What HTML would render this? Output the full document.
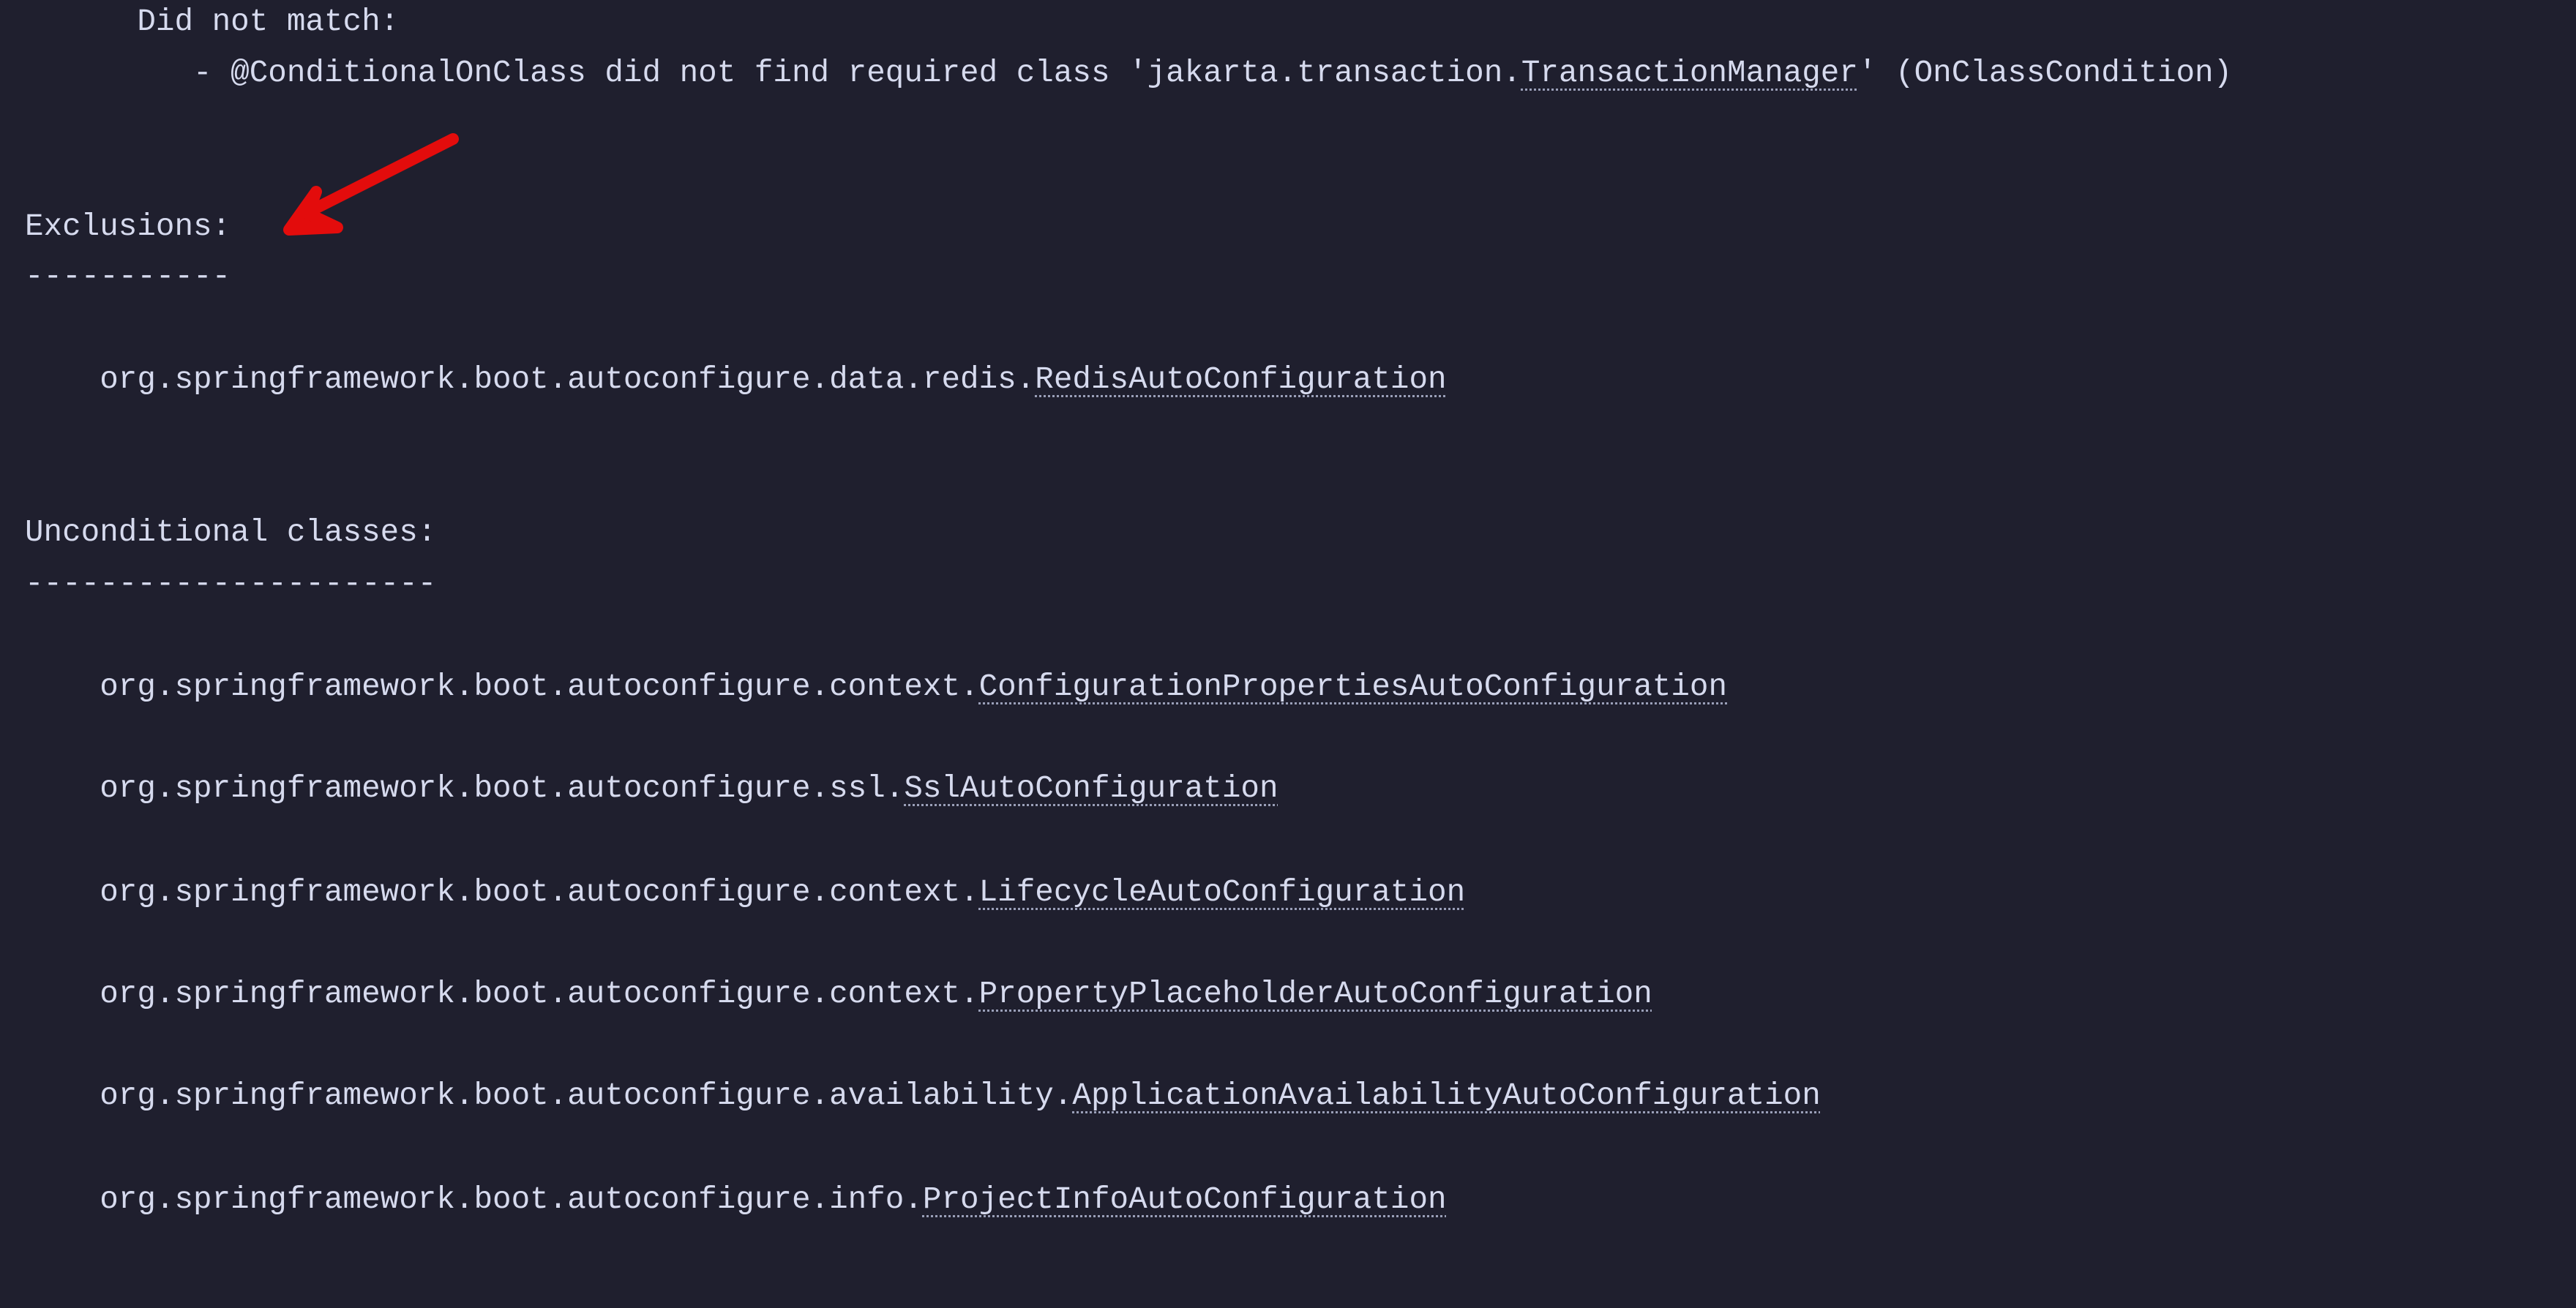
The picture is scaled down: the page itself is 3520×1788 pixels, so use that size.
<!DOCTYPE html>
<html><head><meta charset="utf-8"><style>
html,body{margin:0;padding:0}
body{width:3520px;height:1788px;background:#1f1f2e;overflow:hidden;position:relative;font-family:"Liberation Mono","DejaVu Sans Mono",monospace;font-size:42.6px;color:#d6daee}
.l{position:absolute;left:34px;height:60px;line-height:60px;white-space:pre}
u{text-decoration:underline dotted #9a9fb8;text-decoration-thickness:3px;text-underline-offset:10px}
</style></head><body>
<div class="l" style="top:0px">      Did not match:</div>
<div class="l" style="top:70px">         - @ConditionalOnClass did not find required class 'jakarta.transaction.<u>TransactionManager</u>' (OnClassCondition)</div>
<div class="l" style="top:280px">Exclusions:</div>
<div class="l" style="top:348px">-----------</div>
<div class="l" style="top:489px">    org.springframework.boot.autoconfigure.data.redis.<u>RedisAutoConfiguration</u></div>
<div class="l" style="top:698px">Unconditional classes:</div>
<div class="l" style="top:768px">----------------------</div>
<div class="l" style="top:909px">    org.springframework.boot.autoconfigure.context.<u>ConfigurationPropertiesAutoConfiguration</u></div>
<div class="l" style="top:1048px">    org.springframework.boot.autoconfigure.ssl.<u>SslAutoConfiguration</u></div>
<div class="l" style="top:1190px">    org.springframework.boot.autoconfigure.context.<u>LifecycleAutoConfiguration</u></div>
<div class="l" style="top:1329px">    org.springframework.boot.autoconfigure.context.<u>PropertyPlaceholderAutoConfiguration</u></div>
<div class="l" style="top:1468px">    org.springframework.boot.autoconfigure.availability.<u>ApplicationAvailabilityAutoConfiguration</u></div>
<div class="l" style="top:1610px">    org.springframework.boot.autoconfigure.info.<u>ProjectInfoAutoConfiguration</u></div>
<svg style="position:absolute;left:0;top:0" width="3520" height="1788">
<g stroke="#e30c0c" stroke-width="16" stroke-linecap="round" stroke-linejoin="round" fill="#e30c0c">
<line x1="619" y1="190" x2="425" y2="288"/>
<polygon points="395,314 432,262 421,292 461,311"/>
</g>
</svg>
</body></html>
